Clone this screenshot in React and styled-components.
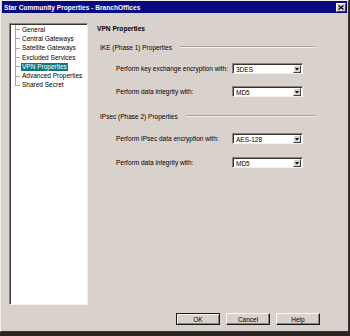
import React from "react";
import styled, { createGlobalStyle } from "styled-components";

const GlobalStyle = createGlobalStyle`
  html, body {
    margin: 0;
    padding: 0;
    background: #2a2522;
  }
  body {
    width: 350px;
    height: 336px;
    overflow: hidden;
    font-family: "Liberation Sans", Arial, sans-serif;
  }
`;

const Window = styled.div`
  box-sizing: border-box;
  width: 349px;
  height: 332px;
  background: #d9d1cb;
  border-top: 1px solid #f2eeea;
  border-left: 1px solid #f2eeea;
  border-right: 1px solid #3c3632;
  border-bottom: 1px solid #3c3632;
  display: flex;
  flex-direction: column;
  padding: 0 1px;
  color: #000;
  font-size: 6.5px;
`;

const TitleBar = styled.div`
  height: 12px;
  background: #0a0a80;
  display: flex;
  align-items: center;
  justify-content: space-between;
  padding: 0 1px 0 2px;
`;

const Title = styled.span`
  color: #fff;
  font-weight: bold;
  font-size: 6.6px;
  letter-spacing: 0;
`;

const CloseButton = styled.div`
  box-sizing: border-box;
  width: 10px;
  height: 9px;
  background: #d9d1cb;
  border-top: 1px solid #fff;
  border-left: 1px solid #fff;
  border-right: 1px solid #404040;
  border-bottom: 1px solid #404040;
  display: flex;
  align-items: center;
  justify-content: center;
`;

const Body = styled.div`
  display: flex;
  padding: 10px 0 0 7px;
  gap: 8px;
`;

const TreePanel = styled.div`
  box-sizing: border-box;
  width: 79px;
  height: 282px;
  background: #fff;
  border-top: 1px solid #8a8480;
  border-left: 1px solid #8a8480;
  border-right: 1px solid #f4f0ec;
  border-bottom: 1px solid #f4f0ec;
  box-shadow: inset 1px 1px 0 #3a3430;
  padding: 1px 0 0 5px;
`;

const TreeList = styled.ul`
  list-style: none;
  margin: 0;
  padding: 0;
`;

const TreeItem = styled.li`
  height: 9.3px;
  display: flex;
  align-items: center;
  padding-left: 6px;
  background:
    linear-gradient(#a8a4a0, #a8a4a0) no-repeat 0 50% / 5px 1px,
    linear-gradient(#a8a4a0, #a8a4a0) no-repeat 0 0 / 1px ${({ last }) => (last ? "50%" : "100%")};
`;

const TreeLabel = styled.span`
  display: inline-block;
  height: 8px;
  line-height: 8px;
  padding: 0 1px;
  white-space: nowrap;
  color: ${({ selected }) => (selected ? "#fff" : "#000")};
  background: ${({ selected }) => (selected ? "#0b7b7d" : "transparent")};
`;

const Content = styled.div`
  flex: 1;
  padding: 1px 32px 0 1px;
  display: flex;
  flex-direction: column;
`;

const Heading = styled.div`
  font-weight: bold;
  height: 10px;
  line-height: 10px;
  font-size: 6.6px;
`;

const GroupHeader = styled.div`
  display: flex;
  align-items: center;
  gap: 8px;
  height: 10px;
  margin-top: ${({ top }) => top}px;
  padding-left: 3px;

  &::after {
    content: "";
    flex: 1;
    height: 0;
    border-top: 1px solid #a9a19b;
    border-bottom: 1px solid #f4f0ec;
  }
`;

const Row = styled.div`
  display: flex;
  align-items: center;
  height: 11px;
  margin-top: ${({ top }) => top}px;
  padding-left: 19px;
`;

const Label = styled.span`
  width: 116px;
  white-space: nowrap;
`;

const Select = styled.div`
  box-sizing: border-box;
  width: 71px;
  height: 11px;
  background: #fff;
  border-top: 1px solid #8a8480;
  border-left: 1px solid #8a8480;
  border-right: 1px solid #f4f0ec;
  border-bottom: 1px solid #f4f0ec;
  box-shadow: inset 1px 1px 0 #3a3430;
  display: flex;
  align-items: center;
  padding: 1px 1px 0 3px;
`;

const SelectValue = styled.span`
  flex: 1;
`;

const SelectArrow = styled.div`
  box-sizing: border-box;
  width: 8px;
  height: 8px;
  background: #d9d1cb;
  border-top: 1px solid #fff;
  border-left: 1px solid #fff;
  border-right: 1px solid #404040;
  border-bottom: 1px solid #404040;
  display: flex;
  align-items: center;
  justify-content: center;
`;

const Footer = styled.div`
  display: flex;
  justify-content: flex-end;
  gap: 6px;
  margin-top: 8px;
  padding-right: 27px;
`;

const Button = styled.div`
  box-sizing: border-box;
  width: 44px;
  height: 12px;
  display: flex;
  align-items: center;
  justify-content: center;
  background: #d9d1cb;
  border-top: 1px solid ${({ primary }) => (primary ? "#1a1a1a" : "#fbf8f5")};
  border-left: 1px solid ${({ primary }) => (primary ? "#1a1a1a" : "#fbf8f5")};
  border-right: 1px solid #1a1a1a;
  border-bottom: 1px solid #1a1a1a;
  box-shadow: ${({ primary }) =>
    primary ? "inset 1px 1px 0 #fbf8f5, inset -1px -1px 0 #8a8480" : "inset -1px -1px 0 #8a8480"};
`;

const treeItems = [
  "General",
  "Central Gateways",
  "Satellite Gateways",
  "Excluded Services",
  "VPN Properties",
  "Advanced Properties",
  "Shared Secret",
];

const Arrow = () => (
  <svg width="4" height="3" viewBox="0 0 4 3">
    <path d="M0 0 H4 L2 2.5 Z" fill="#000" />
  </svg>
);

const Dropdown = ({ value }) => (
  <Select>
    <SelectValue>{value}</SelectValue>
    <SelectArrow>
      <Arrow />
    </SelectArrow>
  </Select>
);

export default function App() {
  return (
    <>
      <GlobalStyle />
      <Window>
        <TitleBar>
          <Title>Star Community Properties - BranchOffices</Title>
          <CloseButton>
            <svg width="6" height="5" viewBox="0 0 6 5">
              <path d="M0.5 0.5 L5.5 4.5 M5.5 0.5 L0.5 4.5" stroke="#000" strokeWidth="1.2" />
            </svg>
          </CloseButton>
        </TitleBar>

        <Body>
          <TreePanel>
            <TreeList>
              {treeItems.map((item, i) => (
                <TreeItem key={item} last={i === treeItems.length - 1}>
                  <TreeLabel selected={item === "VPN Properties"}>{item}</TreeLabel>
                </TreeItem>
              ))}
            </TreeList>
          </TreePanel>

          <Content>
            <Heading>VPN Properties</Heading>
            <GroupHeader top={8}>IKE (Phase 1) Properties</GroupHeader>
            <Row top={11}>
              <Label>Perform key exchange encryption with:</Label>
              <Dropdown value="3DES" />
            </Row>
            <Row top={12}>
              <Label>Perform data integrity with:</Label>
              <Dropdown value="MD5" />
            </Row>
            <GroupHeader top={14}>IPsec (Phase 2) Properties</GroupHeader>
            <Row top={12}>
              <Label>Perform IPsec data encryption with:</Label>
              <Dropdown value="AES-128" />
            </Row>
            <Row top={13}>
              <Label>Perform data integrity with:</Label>
              <Dropdown value="MD5" />
            </Row>
          </Content>
        </Body>

        <Footer>
          <Button primary>OK</Button>
          <Button>Cancel</Button>
          <Button>Help</Button>
        </Footer>
      </Window>
    </>
  );
}
